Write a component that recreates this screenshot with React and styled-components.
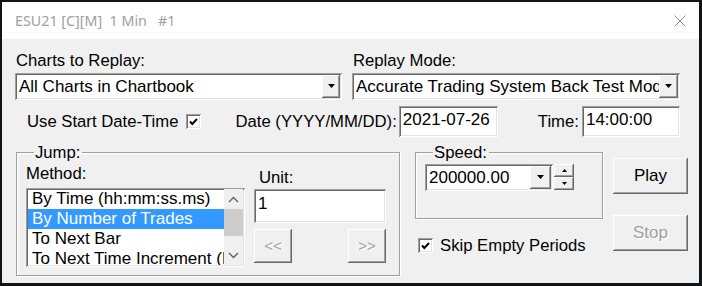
import React from "react";
import styled, { createGlobalStyle, css } from "styled-components";

const GlobalStyle = createGlobalStyle`
  html, body {
    margin: 0;
    padding: 0;
    background: #111416;
    width: 702px;
    height: 286px;
    overflow: hidden;
  }
  * {
    box-sizing: border-box;
  }
`;

const sunken = css`
  background: #ffffff;
  box-shadow: inset 1px 1px #a0a0a0, inset -1px -1px #ffffff,
    inset 2px 2px #696969, inset -2px -2px #e3e3e3;
`;

const raised = css`
  background: #f0f0f0;
  box-shadow: inset -1px -1px #696969, inset 1px 1px #ffffff,
    inset -2px -2px #a0a0a0, inset 2px 2px #f0f0f0;
`;

const Window = styled.div`
  margin: 2px 0 0 2px;
  width: 697px;
  height: 281px;
  display: flex;
  flex-direction: column;
  background: #f0f0f0;
  font-family: "Liberation Sans", Arial, sans-serif;
  font-size: 16.7px;
  color: #000;
`;

const TitleBar = styled.div`
  height: 37px;
  background: #ffffff;
  display: flex;
  align-items: center;
  justify-content: space-between;
  padding: 0 12px 0 13px;
`;

const Title = styled.span`
  font-family: "Noto Sans", "Open Sans", sans-serif;
  font-size: 14.3px;
  color: #a0a0a0;
  white-space: pre;
  margin-top: -1px;
`;

const Close = styled.svg`
  width: 12px;
  height: 12px;
  margin-right: 1px;
`;

const Body = styled.div`
  flex: 1;
  padding: 12px 0 0 13px;
  display: flex;
  flex-direction: column;
`;

const Row = styled.div`
  display: flex;
  align-items: ${(p) => p.$align || "flex-start"};
  margin-top: ${(p) => p.$mt || 0}px;
`;

const Column = styled.div`
  display: flex;
  flex-direction: column;
  width: ${(p) => p.$w}px;
  margin-left: ${(p) => p.$ml || 0}px;
  margin-top: ${(p) => p.$mt || 0}px;
`;

const Label = styled.div`
  line-height: 19px;
  height: 19px;
  white-space: nowrap;
  margin-left: ${(p) => p.$ml || 0}px;
  margin-top: ${(p) => p.$mt || 0}px;
  margin-bottom: ${(p) => p.$mb || 0}px;
`;

const Combo = styled.div`
  ${sunken};
  height: ${(p) => p.$h || 27}px;
  width: ${(p) => p.$w}px;
  display: flex;
  align-items: center;
  padding: 2px;
  overflow: hidden;
`;

const ComboText = styled.div`
  flex: 1;
  padding-left: 2px;
  line-height: 20px;
  white-space: nowrap;
  overflow: hidden;
  font-size: 17px;
`;

const DropButton = styled.div`
  ${raised};
  width: ${(p) => p.$w || 18}px;
  align-self: stretch;
  flex-shrink: 0;
  display: flex;
  align-items: center;
  justify-content: center;
`;

const Arrow = ({ up, size = 7 }) => {
  const h = Math.ceil(size / 2);
  return (
    <svg width={size} height={h + 1} viewBox={`0 0 ${size} ${h + 1}`}>
      {up ? (
        <polygon points={`0,${h} ${size},${h} ${size / 2},0`} fill="#000" />
      ) : (
        <polygon points={`0,0 ${size},0 ${size / 2},${h}`} fill="#000" />
      )}
    </svg>
  );
};

const TextField = styled.div`
  ${sunken};
  width: ${(p) => p.$w}px;
  height: ${(p) => p.$h}px;
  margin-left: ${(p) => p.$ml || 0}px;
  padding: ${(p) => p.$pad || "4px 0 0 4px"};
  line-height: 20px;
  font-size: 17px;
`;

const CheckBox = styled.span`
  ${sunken};
  width: 15px;
  height: 15px;
  display: inline-flex;
  align-items: center;
  justify-content: center;
  flex-shrink: 0;
`;

const Check = () => (
  <CheckBox>
    <svg width="9" height="8" viewBox="0 0 9 8">
      <path d="M1 3.5 L3.3 6 L8 1" stroke="#000" strokeWidth="1.9" fill="none" />
    </svg>
  </CheckBox>
);

const Group = styled.fieldset`
  margin: 0;
  padding: ${(p) => p.$pad};
  width: ${(p) => p.$w}px;
  height: ${(p) => p.$h}px;
  margin-left: ${(p) => p.$ml || 0}px;
  border: 1px solid #a0a0a0;
  box-shadow: 1px 1px #ffffff, inset 1px 1px #ffffff;
  min-width: 0;
`;

const Legend = styled.legend`
  padding: 0 2px 0 1px;
  margin-left: 8px;
  line-height: 19px;
`;

const ListBox = styled.div`
  ${sunken};
  width: 219px;
  height: 79px;
  padding: 1px 2px 2px 2px;
  display: flex;
  overflow: hidden;
`;

const Items = styled.div`
  flex: 1;
  min-width: 0;
  overflow: hidden;
`;

const Item = styled.div`
  height: 20px;
  line-height: 20px;
  padding-left: 4px;
  white-space: nowrap;
  overflow: hidden;
  font-size: 17px;
  background: ${(p) => (p.$selected ? "#3399ff" : "transparent")};
  color: ${(p) => (p.$selected ? "#ffffff" : "#000")};
`;

const ScrollBar = styled.div`
  width: 19px;
  flex-shrink: 0;
  background: #f0f0f0;
  display: flex;
  flex-direction: column;
`;

const ScrollArrow = styled.div`
  height: 20px;
  display: flex;
  align-items: center;
  justify-content: center;
`;

const ScrollTrack = styled.div`
  flex: 1;
  display: flex;
  flex-direction: column;
`;

const Thumb = styled.div`
  height: 27px;
  background: #cdcdcd;
`;

const NavRow = styled.div`
  display: flex;
  justify-content: space-between;
  width: 132px;
  margin-top: 6px;
`;

const Button = styled.div`
  ${raised};
  width: ${(p) => p.$w}px;
  height: ${(p) => p.$h}px;
  margin-top: ${(p) => p.$mt || 0}px;
  display: flex;
  align-items: center;
  justify-content: center;
  font-size: ${(p) => p.$fs || 17}px;
  color: ${(p) => (p.$disabled ? "#a0a0a0" : "#000")};
  text-shadow: ${(p) => (p.$disabled ? "1px 1px #ffffff" : "none")};
  padding-bottom: 1px;
`;

const SpinColumn = styled.div`
  display: flex;
  flex-direction: column;
  width: 20px;
  height: 26px;
  margin-left: 1px;
`;

const SpinButton = styled.div`
  ${raised};
  flex: 1;
  display: flex;
  align-items: center;
  justify-content: center;
`;

const Chevron = ({ up }) => (
  <svg width="11" height="7" viewBox="0 0 11 7">
    <path
      d={up ? "M1 6 L5.5 1.5 L10 6" : "M1 1 L5.5 5.5 L10 1"}
      stroke="#606060"
      strokeWidth="1.4"
      fill="none"
    />
  </svg>
);

const CheckRow = styled.div`
  display: flex;
  align-items: center;
  margin-left: ${(p) => p.$ml || 0}px;
  margin-top: ${(p) => p.$mt || 0}px;
  gap: ${(p) => p.$gap || 6}px;
`;

export default function App() {
  return (
    <>
      <GlobalStyle />
      <Window>
        <TitleBar>
          <Title>{"ESU21 [C][M]  1 Min   #1"}</Title>
          <Close viewBox="0 0 12 12">
            <path d="M0.5 0.5 L11.5 11.5 M11.5 0.5 L0.5 11.5" stroke="#8a8a8a" strokeWidth="1" />
          </Close>
        </TitleBar>
        <Body>
          <Row>
            <Column $w={327}>
              <Label $ml={1} $mb={3}>Charts to Replay:</Label>
              <Combo $w={327}>
                <ComboText>All Charts in Chartbook</ComboText>
                <DropButton>
                  <Arrow />
                </DropButton>
              </Combo>
            </Column>
            <Column $w={328} $ml={10}>
              <Label $ml={1} $mb={3}>Replay Mode:</Label>
              <Combo $w={328}>
                <ComboText>Accurate Trading System Back Test Mode</ComboText>
                <DropButton $w={19}>
                  <Arrow />
                </DropButton>
              </Combo>
            </Column>
          </Row>

          <Row $align="center" $mt={6}>
            <CheckRow $ml={12} $gap={8}>
              <Label>Use Start Date-Time</Label>
              <Check />
            </CheckRow>
            <Label $ml={34}>Date (YYYY/MM/DD):</Label>
            <TextField $w={99} $h={31} $ml={2}>2021-07-26</TextField>
            <Label $ml={40}>Time:</Label>
            <TextField $w={98} $h={31} $ml={3}>14:00:00</TextField>
          </Row>

          <Row $mt={6}>
            <Group $w={384} $h={133} $pad="3px 0 0 9px" style={{ marginLeft: 1 }}>
              <Legend>Jump:</Legend>
              <Row>
                <Column $w={220}>
                  <Label $mt={-1} $mb={5}>Method:</Label>
                  <ListBox>
                    <Items>
                      <Item>By Time (hh:mm:ss.ms)</Item>
                      <Item $selected>By Number of Trades</Item>
                      <Item>To Next Bar</Item>
                      <Item>To Next Time Increment (H</Item>
                    </Items>
                    <ScrollBar>
                      <ScrollArrow>
                        <Chevron up />
                      </ScrollArrow>
                      <ScrollTrack>
                        <Thumb />
                      </ScrollTrack>
                      <ScrollArrow>
                        <Chevron />
                      </ScrollArrow>
                    </ScrollBar>
                  </ListBox>
                </Column>
                <Column $w={132} $ml={8}>
                  <Label $ml={5} $mt={3} $mb={2}>Unit:</Label>
                  <TextField $w={132} $h={34} $pad="5px 0 0 4px">1</TextField>
                  <NavRow>
                    <Button $w={38} $h={34} $disabled $fs={15}>&lt;&lt;</Button>
                    <Button $w={38} $h={34} $disabled $fs={15}>&gt;&gt;</Button>
                  </NavRow>
                </Column>
              </Row>
            </Group>

            <Column $w={188} $ml={15}>
              <Group $w={188} $h={76} $pad="2px 0 0 9px">
                <Legend>Speed:</Legend>
                <Row>
                  <Combo $w={128} $h={27}>
                    <ComboText>200000.00</ComboText>
                    <DropButton $w={21}>
                      <Arrow />
                    </DropButton>
                  </Combo>
                  <SpinColumn>
                    <SpinButton>
                      <Arrow up size={5} />
                    </SpinButton>
                    <SpinButton>
                      <Arrow size={5} />
                    </SpinButton>
                  </SpinColumn>
                </Row>
              </Group>
              <CheckRow $ml={3} $mt={17} $gap={7}>
                <Check />
                <Label>Skip Empty Periods</Label>
              </CheckRow>
            </Column>

            <Column $w={75} $ml={10} $mt={15}>
              <Button $w={75} $h={36}>Play</Button>
              <Button $w={75} $h={36} $mt={21} $disabled>Stop</Button>
            </Column>
          </Row>
        </Body>
      </Window>
    </>
  );
}
